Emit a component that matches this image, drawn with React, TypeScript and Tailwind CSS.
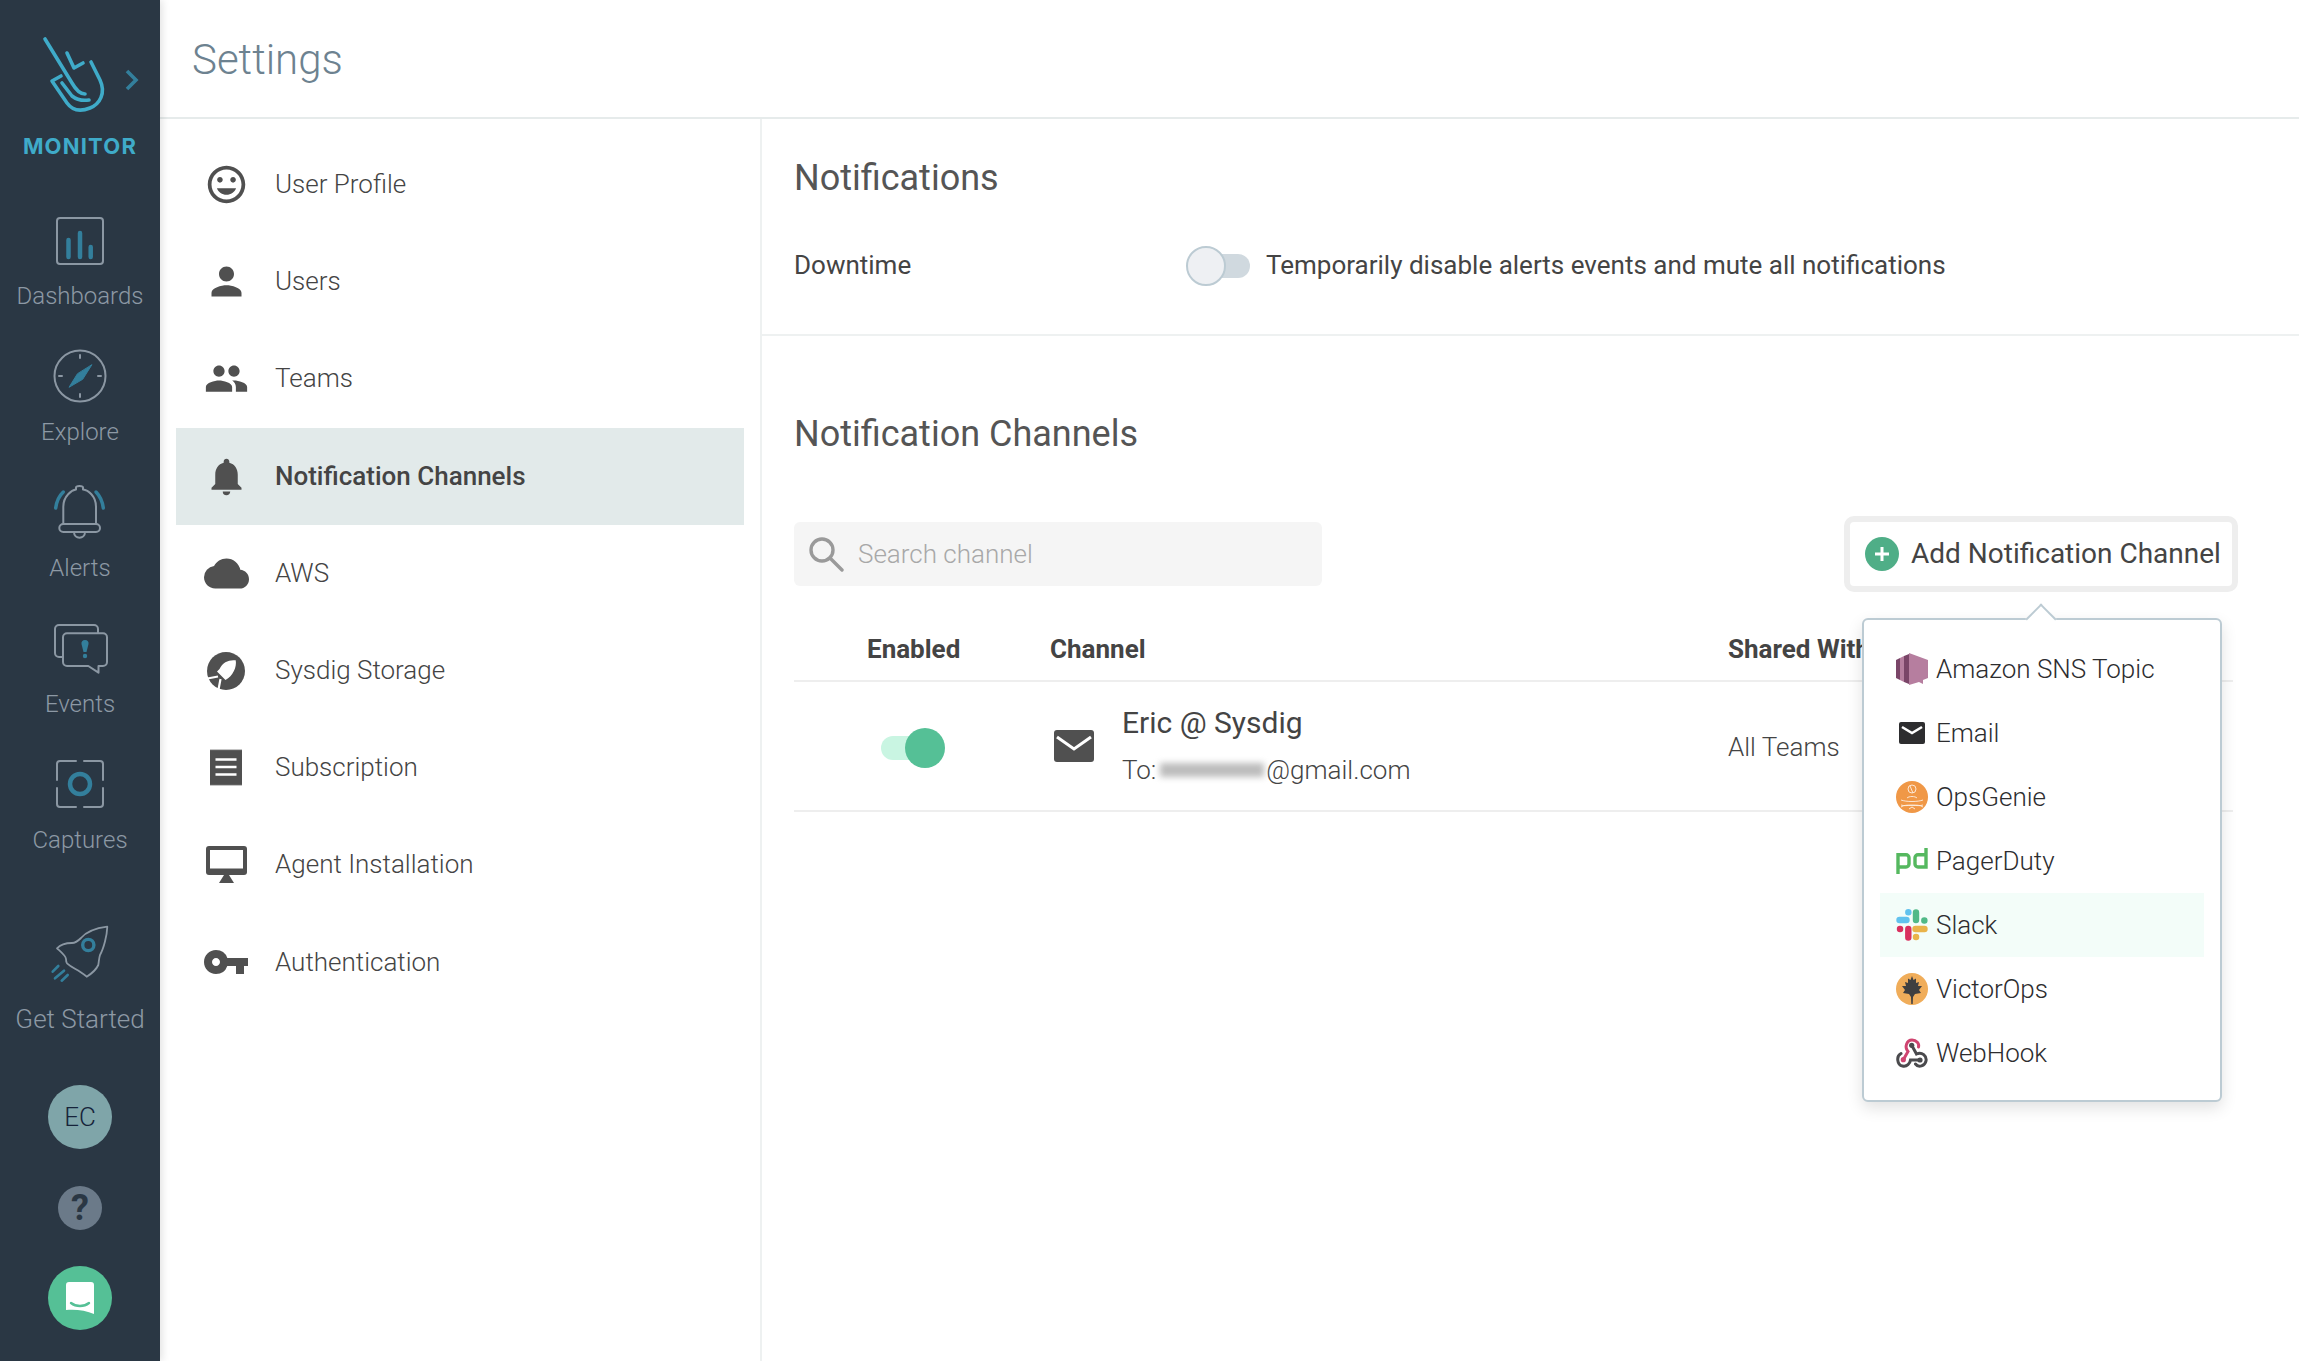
import React from "react";
import { MdTagFaces, MdPerson, MdPeople, MdNotifications, MdCloud, MdVpnKey } from "react-icons/md";

const G = "#8b97a3";
const T = "#337f9c";

function SideItem({ label, children }: { label: string; children: React.ReactNode }) {
  return (
    <div className="flex h-[136px] flex-col items-center">
      <svg viewBox="0 0 62 62" className="h-[62px] w-[62px]" fill="none" strokeLinecap="round" strokeLinejoin="round">
        {children}
      </svg>
      <div className="mt-[10px] h-[30px] text-[24px] font-light leading-[30px] text-[#8d99a5]">{label}</div>
    </div>
  );
}

function Logo() {
  return (
    <svg viewBox="0 0 160 130" className="h-[130px] w-[160px]" fill="none" stroke="#3fabc9" strokeWidth="3.6" strokeLinecap="round" strokeLinejoin="round">
      <path d="M45,39 L72,83 C76,90 80,94 85,94" />
      <path d="M67,53 L74,68 L83,63" />
      <path d="M91,62 L100,80 C106,93 100,104 90,108 C80,112 72,110 67,103 L52,81 L61,76" />
      <path d="M62,83 L72,96 C77,100 82,101 89,100" />
      <path d="M127,71 L136,80 L127,89" stroke="#337f9c" strokeWidth="3.6" strokeLinecap="butt" strokeLinejoin="miter" />
    </svg>
  );
}

function Sidebar() {
  return (
    <aside className="relative z-10 flex h-full w-[160px] shrink-0 flex-col items-center bg-[#2a3744] shadow-[2px_0_8px_rgba(0,0,0,0.12)]">
      <Logo />
      <div className="mt-[3px] h-[26px] text-[22px] font-bold leading-[26px] tracking-[1.2px] text-[#3fabc9] font-[Inter,sans-serif]">MONITOR</div>
      <div className="mt-[50px] flex w-full flex-col">
        <SideItem label="Dashboards">
          <rect x="8" y="9" width="46" height="46" rx="3" stroke={G} strokeWidth="2" />
          <path d="M19.5 31V48M31 24V48M41.7 38V48" stroke={T} strokeWidth="4.5" />
        </SideItem>
        <SideItem label="Explore">
          <circle cx="31" cy="31" r="25.5" stroke={G} strokeWidth="2" />
          <path d="M31 10v3M31 49v3M10 31h3M49 31h3" stroke={G} strokeWidth="2" />
          <path d="M42.7 20L33.7 34.3L20 42.3L28.3 29Z" fill={T} stroke={T} strokeWidth="1" />
        </SideItem>
        <SideItem label="Alerts">
          <path d="M14.3 43V25.7C14.3 15 23 9 27 8.5V6.5C27 4.5 34 4.5 34 6.5V8.5C39 9 47 15 47 25.7V43" stroke={G} strokeWidth="2" />
          <rect x="10.3" y="43" width="40.7" height="8" rx="4" stroke={G} strokeWidth="2" />
          <path d="M25 51C25 58.5 36 58.5 36 51" stroke={G} strokeWidth="2" />
          <path d="M14.3 11C10 15 7.5 21 6.7 27M47 11C51 15 53.5 21 54.3 27" stroke={T} strokeWidth="3.5" />
        </SideItem>
        <SideItem label="Events">
          <path d="M49 16V12A4 4 0 0 0 45 8H10A4 4 0 0 0 6 12V36A4 4 0 0 0 10 40H14" stroke={G} strokeWidth="2" />
          <path d="M18 16.3H54A4 4 0 0 1 58 20.3V45A4 4 0 0 1 54 49H49.5V55.7L39.3 49H18A4 4 0 0 1 14 45V20.3A4 4 0 0 1 18 16.3Z" stroke={G} strokeWidth="2" />
          <path d="M36 23C38.5 23 40 25 39.5 27L37.5 35H34.5L32.5 27C32 25 33.5 23 36 23Z" fill={T} />
          <circle cx="36" cy="39" r="2.2" fill={T} />
        </SideItem>
        <SideItem label="Captures">
          <path d="M8 27V11A3 3 0 0 1 11 8H27M35 8H51A3 3 0 0 1 54 11V27M8 35V51A3 3 0 0 0 11 54H27M35 54H51A3 3 0 0 0 54 51V35" stroke={G} strokeWidth="2" />
          <circle cx="31" cy="31" r="10" stroke={T} strokeWidth="4.5" />
        </SideItem>
      </div>
      <div className="mt-[34px] flex flex-col items-center">
        <svg viewBox="0 0 62 62" className="h-[62px] w-[62px]" fill="none" strokeLinecap="round" strokeLinejoin="round">
          <path d="M58.3 3.7C48 5 38 8 32 15C29 18 26 20 23 20C17 20 11 22 8 25.3C12 29 17 33 17 36C17 38 17 39 18 40.3C22 44 27 46 31 48.7C33 50 36 52 37.7 53.7C42 51 47 47 49.3 42C50 38 50 35 51 32C55 25 58 12 58.3 3.7Z" stroke={G} strokeWidth="1.8" />
          <circle cx="39.3" cy="22" r="5.6" stroke={T} strokeWidth="3.4" />
          <path d="M3.7 48.7L9.3 43M6 55.3L15 47.7M12.7 57.7L18.7 52" stroke={T} strokeWidth="2.6" />
        </svg>
        <div className="mt-[18px] h-[32px] text-[26px] font-light leading-[32px] text-[#8d99a5]">Get Started</div>
      </div>
      <div className="mt-[50px] flex h-[64px] w-[64px] items-center justify-center rounded-full bg-[#7fa5a9] text-[26px] font-light text-[#16233a]">EC</div>
      <div className="mt-[37px] flex h-[44px] w-[44px] items-center justify-center rounded-full bg-[#6b7a89] text-[36px] font-bold text-[#2a3744]">?</div>
      <div className="mt-[36px] flex h-[64px] w-[64px] items-center justify-center rounded-full bg-[#55c096]">
        <svg viewBox="0 0 28 32" className="h-[32px] w-[28px]">
          <path d="M3 0H25A3 3 0 0 1 28 3V32C20 28 8 27 0 28V3A3 3 0 0 1 3 0Z" fill="#fff" />
          <path d="M5 21C10 25 18 25 23 21" fill="none" stroke="#55c096" strokeWidth="2.4" strokeLinecap="round" />
        </svg>
      </div>
    </aside>
  );
}

const zig = (() => {
  let d = "M0 1.5";
  for (let i = 0; i < 16; i++) d += `L${i * 2 + 1} 0L${i * 2 + 2} 1.5`;
  d += "V35.5";
  for (let i = 15; i >= 0; i--) d += `L${i * 2 + 1} 37L${i * 2} 35.5`;
  return d + "Z";
})();

function NavIcon({ name }: { name: string }) {
  const c = "#505050";
  if (name === "User Profile") return <MdTagFaces size={45} color={c} />;
  if (name === "Users") return <MdPerson size={45} color={c} />;
  if (name === "Teams") return <MdPeople size={45} color={c} />;
  if (name === "Notification Channels") return <MdNotifications size={45} color={c} />;
  if (name === "AWS") return <MdCloud size={45} color={c} />;
  if (name === "Sysdig Storage")
    return (
      <svg viewBox="0 0 38 38" className="h-[38px] w-[38px]" fill="none">
        <circle cx="19" cy="19" r="19" fill={c} />
        <path d="M28.7 8.3C22 7.5 16 10 12.5 17L10 19.5L18.5 28C26 24 30 15 28.7 8.3Z" fill="#fff" />
        <path d="M0.5 26.5L11 24.5M11.5 37.5L13.5 27" stroke="#fff" strokeWidth="2.2" />
      </svg>
    );
  if (name === "Subscription")
    return (
      <svg viewBox="0 0 32 37" className="h-[37px] w-[34px]">
        <path d={zig} fill={c} />
        <path d="M5.5 10.5H26.5M5.5 18H26.5M5.5 25.5H26.5" stroke="#fff" strokeWidth="2.6" />
      </svg>
    );
  if (name === "Agent Installation")
    return (
      <svg viewBox="0 0 41 37" className="h-[37px] w-[41px]">
        <rect width="41" height="29" rx="3" fill={c} />
        <rect x="4" y="4" width="33" height="18.5" fill="#fff" />
        <path d="M13 37L18 29H23L28 37Z" fill={c} />
      </svg>
    );
  return <MdVpnKey size={48} color={c} />;
}

const navItems = ["User Profile", "Users", "Teams", "Notification Channels", "AWS", "Sysdig Storage", "Subscription", "Agent Installation", "Authentication"];

function Nav() {
  return (
    <nav className="w-[602px] shrink-0 border-r-2 border-[#eef1f1] pl-[16px] pr-[16px] pt-[17px]">
      {navItems.map((n) => {
        const active = n === "Notification Channels";
        return (
          <div key={n} className={`flex h-[97.2px] items-center ${active ? "bg-[#e2eaea]" : ""}`}>
            <div className="flex w-[99px] shrink-0 justify-center pl-[1px]">
              <NavIcon name={n} />
            </div>
            <span className={`text-[26px] ${active ? "font-medium text-[#444]" : "font-light text-[#444]"}`}>{n}</span>
          </div>
        );
      })}
    </nav>
  );
}

function Toggle() {
  return (
    <div className="relative h-[40px] w-[66px] shrink-0">
      <div className="absolute left-[20px] top-[8px] h-[24px] w-[44px] rounded-full bg-[#d0d9df]" />
      <div className="absolute left-0 top-0 h-[40px] w-[40px] rounded-full border-2 border-[#bccbd3] bg-[#eef0f3]" />
    </div>
  );
}

function MenuIcon({ name }: { name: string }) {
  const cls = "h-[32px] w-[32px]";
  switch (name) {
    case "Amazon SNS Topic":
      return (
        <svg viewBox="0 0 32 32" className={cls}>
          <path d="M0 7L4 5V27L0 25Z" fill="#7a4568" />
          <path d="M4 5L8 3V29L4 27Z" fill="#b67e9f" />
          <path d="M8 3L13 1V31L8 29Z" fill="#7a4568" />
          <path d="M13 0L32 7V25L27 27V31L23 29L13 32Z" fill="#b67e9f" />
        </svg>
      );
    case "Email":
      return (
        <svg viewBox="0 0 32 32" className={cls}>
          <rect x="3" y="5" width="26" height="22" rx="2" fill="#2d2d2f" />
          <path d="M6 10L16 16L26 10" fill="none" stroke="#fff" strokeWidth="2.6" />
        </svg>
      );
    case "OpsGenie":
      return (
        <svg viewBox="0 0 32 32" className={cls}>
          <circle cx="16" cy="16" r="16" fill="#f09847" />
          <g fill="none" stroke="#fff" strokeWidth="0.9" opacity="0.85">
            <circle cx="16" cy="8" r="4" />
            <path d="M14 5L17 12M5 19C10 21 22 21 27 19M5 24C10 26 22 22 27 26M5 26C10 22 22 26 27 24M13 28L16 26L19 28M11 17C13 15 19 15 21 17" />
          </g>
        </svg>
      );
    case "PagerDuty":
      return (
        <svg viewBox="0 0 32 32" className={cls} fill="none" stroke="#55b85f" strokeWidth="3.4">
          <path d="M2 29V9.7H10A3 3 0 0 1 13 12.7V19A3 3 0 0 1 10 22H2" />
          <path d="M30 3V22H22A3 3 0 0 1 19 19V12.7A3 3 0 0 1 22 9.7H30" />
        </svg>
      );
    case "Slack":
      return (
        <svg viewBox="0 0 32 32" className={cls} fill="none" strokeLinecap="round" strokeWidth="6.4">
          <path d="M3.5 11H10.5M12.3 3.3H12.4" stroke="#62c2ee" />
          <path d="M20 3.5V11M28.3 11.5H28.4" stroke="#50b987" />
          <path d="M19.5 20H28.5M20 28H20.1" stroke="#e9b34a" />
          <path d="M12.3 20V28.5M4 20H4.1" stroke="#d9305f" />
        </svg>
      );
    case "VictorOps":
      return (
        <svg viewBox="0 0 32 32" className={cls}>
          <circle cx="16" cy="16" r="16" fill="#f0ad5a" />
          <path d="M16 3L17.5 7L20 5.5L20 10L23 9L22 13L26 13L23 17L25 20L19 21L17 24L16.7 31H15.3L15 24L13 21L7 20L9 17L6 13L10 13L9 9L12 10L12 5.5L14.5 7Z" fill="#3f3f40" />
        </svg>
      );
    default:
      return (
        <svg viewBox="0 0 32 32" className={cls} fill="none" strokeWidth="3" strokeLinecap="round">
          <path d="M7.3 22.7L12 14.5C8 10 11 3 16 3C20.5 3 23.5 6.5 22.5 10" stroke="#cf4470" />
          <path d="M15.7 8.3L20.5 17C26 14.5 31 19 30 24C29 29 22.5 31 19.5 27" stroke="#4a4a4d" />
          <path d="M5 16.5C0 19 1 28 6.5 29C11 30 14 26.5 14.5 23H24" stroke="#4a4a4d" />
          <circle cx="15.7" cy="8.3" r="2.6" fill="#4a4a4d" stroke="none" />
          <circle cx="24" cy="23" r="2.6" fill="#4a4a4d" stroke="none" />
          <circle cx="7.3" cy="22.7" r="2.6" fill="#cf4470" stroke="none" />
        </svg>
      );
  }
}

const menu = ["Amazon SNS Topic", "Email", "OpsGenie", "PagerDuty", "Slack", "VictorOps", "WebHook"];

function Popover() {
  return (
    <div className="absolute right-[16px] top-[102px] z-20 h-[484px] w-[360px] rounded-[6px] border-2 border-[#bccbd3] bg-white px-[16px] py-[17px] shadow-[0_6px_16px_rgba(0,0,0,0.12)]">
      <div className="absolute left-[166px] top-[-12px] h-[22px] w-[22px] rotate-45 border-l-2 border-t-2 border-[#bccbd3] bg-white" />
      {menu.map((m) => (
        <div key={m} className={`flex h-[64px] items-center pl-[16px] text-[26px] font-light text-[#2d2d2f] ${m === "Slack" ? "bg-[#f3fdf9]" : ""}`}>
          <MenuIcon name={m} />
          <span className="ml-[8px]">{m}</span>
        </div>
      ))}
    </div>
  );
}

function Main() {
  return (
    <main className="min-w-0 flex-1">
      <section className="h-[217px] border-b-2 border-[#eef1f1] pl-[32px]">
        <h2 className="pt-[34px] text-[36px] font-normal leading-[50px] text-[#555]">Notifications</h2>
        <div className="mt-[43px] flex h-[40px] items-center">
          <span className="w-[392px] pb-[2px] text-[26px] font-normal text-[#444]">Downtime</span>
          <Toggle />
          <span className="ml-[14px] pb-[2px] text-[26px] font-normal text-[#444]">Temporarily disable alerts events and mute all notifications</span>
        </div>
      </section>
      <section className="pl-[32px] pr-[61px]">
        <h2 className="pt-[73px] text-[36px] font-normal leading-[50px] text-[#555]">Notification Channels</h2>
        <div className="mt-[57px] flex items-start justify-between">
          <div className="mt-[6px] flex h-[64px] w-[528px] items-center rounded-[6px] bg-[#f5f5f5] pl-[14px]">
            <svg viewBox="0 0 36 36" className="h-[36px] w-[36px]" fill="none" stroke="#9a9a9a" strokeWidth="3.4">
              <circle cx="14" cy="14" r="11" />
              <path d="M22 22L34 34" strokeLinecap="round" />
            </svg>
            <span className="ml-[14px] text-[26px] font-light text-[#a8a8a8]">Search channel</span>
          </div>
          <div className="relative">
            <button className="flex h-[76px] w-[394px] items-center rounded-[10px] border-[6px] border-[#eeeeee] bg-white pl-[15px]">
              <span className="flex h-[34px] w-[34px] items-center justify-center rounded-full bg-[#4fae87]">
                <svg viewBox="0 0 20 20" className="h-[20px] w-[20px]">
                  <path d="M10 3V17M3 10H17" stroke="#fff" strokeWidth="3" />
                </svg>
              </span>
              <span className="ml-[12px] whitespace-nowrap text-[28px] font-normal text-[#444]">Add Notification Channel</span>
            </button>
            <Popover />
          </div>
        </div>
        <div className="mr-[5px]">
          <div className="mt-[38px] flex h-[52px] items-center border-b-2 border-[#eeeeee] pb-[12px] text-[26px] font-bold text-[#444]">
            <div className="w-[256px] pl-[73px]">Enabled</div>
            <div className="w-[678px]">Channel</div>
            <div>Shared With</div>
          </div>
          <div className="flex h-[130px] items-center border-b-2 border-[#eeeeee]">
            <div className="w-[256px] pl-[87px]">
              <div className="relative top-[2px] h-[40px] w-[64px]">
                <div className="absolute left-0 top-[8px] h-[24px] w-[40px] rounded-full bg-[#c9f5e2]" />
                <div className="absolute left-[24px] top-0 h-[40px] w-[40px] rounded-full bg-[#55c096]" />
              </div>
            </div>
            <div className="flex w-[678px] items-center">
              <svg viewBox="0 0 40 32" className="ml-[4px] h-[32px] w-[40px]">
                <rect width="40" height="32" rx="3" fill="#505050" />
                <path d="M3 7L20 19L37 7" fill="none" stroke="#fff" strokeWidth="3" />
              </svg>
              <div className="ml-[28px] mt-[-2px]">
                <div className="text-[30px] font-normal leading-[40px] text-[#444]">Eric @ Sysdig</div>
                <div className="mt-[10px] flex items-center text-[26px] font-light leading-[34px] text-[#444]">
                  To:
                  <span className="ml-[4px] mr-[2px] h-[14px] w-[104px] bg-[#bdbdbd] blur-[3px]" />
                  @gmail.com
                </div>
              </div>
            </div>
            <div className="relative top-[1px] text-[26px] font-light text-[#444]">All Teams</div>
          </div>
        </div>
      </section>
    </main>
  );
}

export default function App() {
  return (
    <div className="flex h-[1361px] w-full overflow-hidden bg-white font-[Roboto,sans-serif]">
      <Sidebar />
      <div className="flex min-w-0 flex-1 flex-col">
        <header className="flex h-[119px] shrink-0 items-center border-b-2 border-[#e6ebeb] pl-[32px] pt-[2px]">
          <h1 className="text-[42px] font-light text-[#6d8290]">Settings</h1>
        </header>
        <div className="flex min-h-0 flex-1">
          <Nav />
          <Main />
        </div>
      </div>
    </div>
  );
}
